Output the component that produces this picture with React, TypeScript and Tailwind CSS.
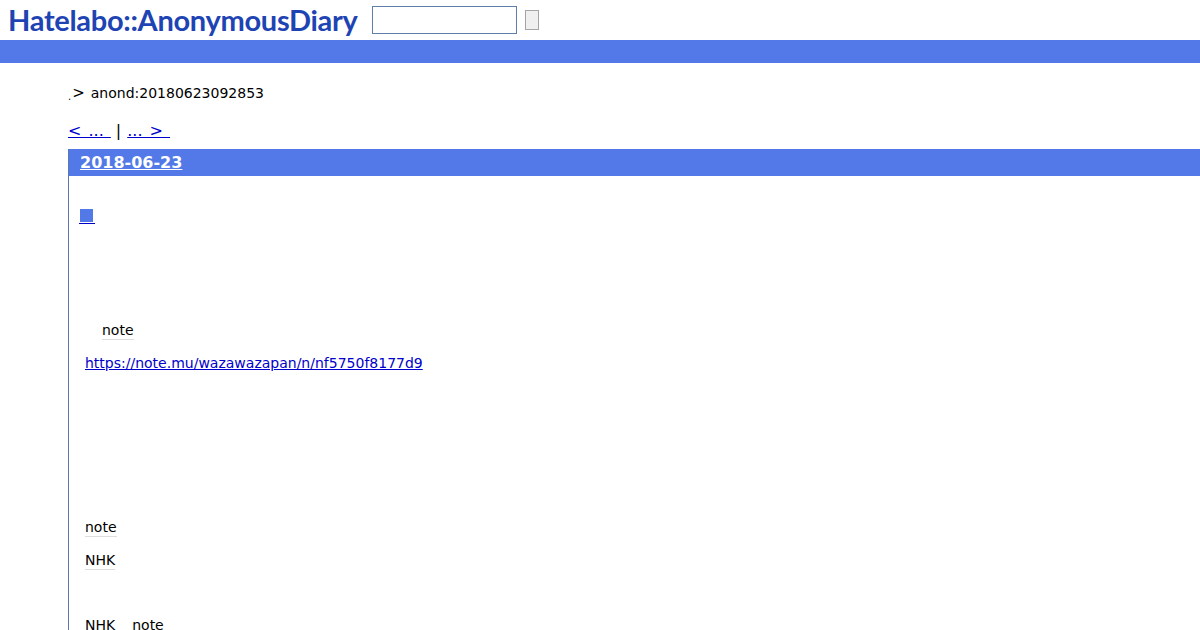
export default function App() {
  return (
    <div className="w-[1200px] h-[630px] overflow-hidden bg-white text-black font-['DejaVu_Sans',sans-serif] text-[14px] leading-[20px]">
      {/* header */}
      <div className="h-10 flex items-start">
        <div className="ml-2 mt-[2px] w-[364px] h-9 text-[#1e44b4] font-bold text-[29px] leading-9 tracking-[-0.3px] font-['Lato',sans-serif] whitespace-nowrap">
          Hatelabo::AnonymousDiary
        </div>
        <input className="mt-[6px] w-[145px] h-7 border border-[#5f7fa8] bg-white" />
        <button className="mt-[10px] ml-2 w-[14px] h-5 border border-[#a5a5a5] bg-[#efefef]"></button>
      </div>
      <div className="h-[23px] bg-[#5279e7]"></div>

      <div className="pl-[68px]">
        {/* breadcrumb */}
        <div className="mt-5 h-5 flex items-center whitespace-nowrap">
          <span className="text-[10px] mt-2">.</span>
          <span className="ml-[1px] text-[15px]">&gt;</span>
          <span className="ml-[6px]">anond:20180623092853</span>
        </div>

        {/* prev / next */}
        <div className="mt-[18px] h-5 text-[16px] whitespace-nowrap">
          <a href="#" className="text-[#0000cc] underline [word-spacing:2px]">&lt; ...&nbsp;</a>
          <span className="ml-[5px]">|</span>
          <a href="#" className="ml-[6px] text-[#0000cc] underline [word-spacing:2px]">... &gt;&nbsp;</a>
        </div>

        {/* day section */}
        <div className="mt-2 border-l border-[#5d77b0]">
          <div className="h-[27px] bg-[#5279e7] pl-[11px] flex items-center">
            <a href="#" className="text-white font-bold text-[16px] underline">2018-06-23</a>
          </div>
          <div className="pl-[10px] pt-[31px]">
            <a href="#" className="block w-4 h-[17px] border-b border-[#0000cc] pl-[1px] pt-[2px]">
              <span className="block w-[13px] h-[13px] bg-[#5279e7]"></span>
            </a>
          </div>
          <div className="pl-4">
            <div className="mt-[96px] ml-[17px] h-5 w-fit border-b border-[#dddddd]">note</div>
            <div className="mt-[13px] h-5">
              <a href="#" className="text-[#0000cc] underline">https://note.mu/wazawazapan/n/nf5750f8177d9</a>
            </div>
            <div className="mt-[144px] h-5 w-fit border-b border-[#dddddd]">note</div>
            <div className="mt-[13px] h-5 w-fit border-b border-[#dddddd]">NHK</div>
            <div className="mt-[45px] h-5 flex gap-[17px]">
              <span>NHK</span>
              <span>note</span>
            </div>
          </div>
        </div>
      </div>
    </div>
  );
}
